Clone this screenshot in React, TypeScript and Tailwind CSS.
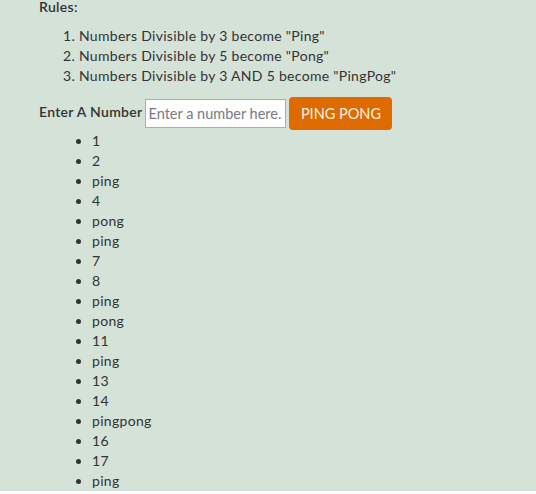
const results = [
  "1", "2", "ping", "4", "pong", "ping", "7", "8", "ping", "pong",
  "11", "ping", "13", "14", "pingpong", "16", "17", "ping",
];

export default function App() {
  return (
    <div
      className="min-h-screen w-full bg-[#d4e2d8] text-[#333] text-[14px] leading-[20px] tracking-[0.3px]"
      style={{ fontFamily: "Lato, 'Open Sans', sans-serif" }}
    >
      <div className="pl-[39px]">
        <p className="font-semibold -mt-[3px]">Rules:</p>
        <ol className="list-decimal pl-[40px] mt-[9px]">
          <li>Numbers Divisible by 3 become "Ping"</li>
          <li>Numbers Divisible by 5 become "Pong"</li>
          <li>Numbers Divisible by 3 AND 5 become "PingPog"</li>
        </ol>

        {/* Form */}
        <div className="mt-[11px] flex items-center">
          <label className="font-semibold mr-[3px] -mt-[3px]">Enter A Number</label>
          <input
            type="text"
            placeholder="Enter a number here."
            className="w-[141px] h-[29px] border border-[#a3b596] bg-white px-[2px] text-[14.5px] tracking-normal placeholder:text-[#7a7a85] outline-none"
          />
          <button className="ml-[3px] h-[33px] w-[103px] rounded-[4px] bg-[#dd6b00] text-[#fdf3ea] text-[14.5px] tracking-normal">
            PING PONG
          </button>
        </div>

        <ul className="list-disc pl-[53px] mt-[1px]">
          {results.map((r, i) => (
            <li key={i}>{r}</li>
          ))}
        </ul>
      </div>
    </div>
  );
}
